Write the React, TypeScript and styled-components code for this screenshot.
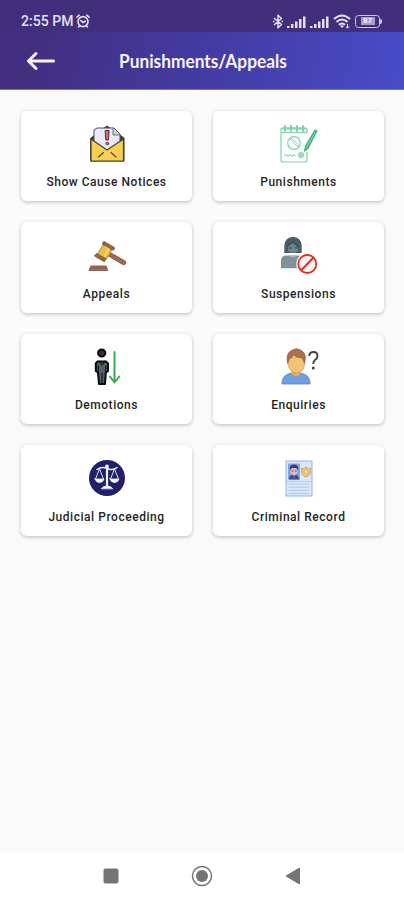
import React from "react";
import styled, { createGlobalStyle } from "styled-components";

const GlobalStyle = createGlobalStyle`
  * { box-sizing: border-box; }
  body { margin: 0; background: #fafafa; font-family: Roboto, sans-serif; }
`;

const Screen = styled.div`
  width: 404px;
  height: 900px;
  display: flex;
  flex-direction: column;
  background: #fafafa;
  overflow: hidden;
`;

const StatusBar = styled.div`
  height: 32px;
  flex: none;
  display: flex;
  align-items: center;
  justify-content: space-between;
  padding: 10px 22px 0 21px;
  background: #412f7b;
  color: #e6e0f5;
`;

const StatusGroup = styled.div<{ $gap: number }>`
  display: flex;
  align-items: center;
  gap: ${(p) => p.$gap}px;
  svg { display: block; }
`;

const Clock = styled.span`
  font-size: 14px;
  line-height: 20px;
  font-weight: 500;
  letter-spacing: 0.05px;
  white-space: nowrap;
`;

const Header = styled.header`
  height: 58px;
  flex: none;
  display: grid;
  grid-template-columns: 119px 1fr;
  align-items: center;
  background: linear-gradient(100deg, #422f80 8%, #43389b 42%, #484bc6 98%);
  border-bottom: 1px solid #7b74b4;
  color: #f6f4ff;
`;

const BackButton = styled.button`
  border: 0;
  background: none;
  padding: 0 0 0 26px;
  color: inherit;
  svg { display: block; }
`;

const Title = styled.h1`
  margin: 1px 0 0;
  justify-self: start;
  font-family: Lato, sans-serif;
  font-size: 19px;
  line-height: 24px;
  font-weight: 700;
  transform: scaleX(0.91);
  transform-origin: left center;
  white-space: nowrap;
`;

const Grid = styled.main`
  flex: 1;
  display: grid;
  grid-template-columns: 171px 171px;
  grid-auto-rows: 90.5px;
  align-content: start;
  gap: 21px;
  padding: 20.5px 21px;
`;

const Card = styled.div`
  display: flex;
  flex-direction: column;
  align-items: center;
  padding-top: 14.5px;
  border-radius: 6px;
  background: #fff;
  box-shadow: 0 1px 4px rgba(0, 0, 0, 0.18), 0 2px 3px rgba(0, 0, 0, 0.06);
`;

const Picture = styled.svg`
  width: 36px;
  height: 38px;
  flex: none;
  overflow: visible;
`;

const Label = styled.span`
  margin-top: 11px;
  font-size: 12px;
  line-height: 16px;
  font-weight: 500;
  letter-spacing: 0.54px;
  color: #262626;
  white-space: nowrap;
`;

const NavBar = styled.nav`
  height: 48px;
  flex: none;
  display: flex;
  justify-content: center;
  background: #fff;
`;

const NavButton = styled.button`
  width: 91.3px;
  border: 0;
  padding: 0;
  background: none;
  display: flex;
  align-items: center;
  justify-content: center;
`;

const Envelope = () => (
  <g strokeLinejoin="round" strokeLinecap="round">
    <path d="M2 13 18 1l17 12v23H2z" fill="#3b3b42" stroke="#33333a" />
    <path d="M5 17V5l3-2h17l6 6v9L18 27z" fill="#e9eafb" stroke="#4a4a55" strokeWidth="1" />
    <path d="M24 3v7h7" fill="#c3d3cf" stroke="#6b7471" strokeWidth="1" />
    <path d="M2 14 18 25 34.500 14v22H2z" fill="#f7cf52" stroke="#4b4326" strokeWidth="1.200" />
    <path d="m9.500 32 5-4.500M27 32l-5-4.500" fill="none" stroke="#5e4d20" strokeWidth="1.200" />
    <path d="M16.500 5.500h3.600L19.500 15h-2.400z" fill="#d36672" stroke="#572e3c" strokeWidth="1" />
    <circle cx="18.300" cy="18.600" r="1.400" fill="#d36672" stroke="#572e3c" strokeWidth=".8" />
  </g>
);

const Notepad = () => (
  <g fill="none" stroke="#7dd3aa" strokeWidth="1.200" strokeLinecap="round" strokeLinejoin="round">
    <path d="M26 8V5q0-2-2-2H2Q0 3 0 5v30q0 2 2 2h22q2 0 2-2v-8M0 7.500h26" />
    <path d="M4 1v5M10 1v5M16 1v5M22 1v5" strokeWidth="2" />
    <path d="M2 3.500h5M8 3.500h5M14 3.500h5M20 3.500h4" strokeWidth="1.800" />
    <circle cx="13" cy="18" r="6.300" />
    <path d="m8.600 13.500 8.900 9M10 12.500l8.500 8.600" strokeWidth=".9" />
    <path d="M4 30.500q1-1.500 2 0t2 0 2 0 2 0 2 0M18 28h4v4h-4zM20 27v6M17 30h6" />
    <path d="m23.500 26 1-5L34 5l2 1-9 17.500z" fill="#53bc8b" stroke="#49b481" />
    <path d="m26 21 8-13" stroke="#a5e3c5" strokeWidth=".6" />
  </g>
);

const Gavel = () => (
  <g stroke="#765645" strokeWidth=".9" strokeLinejoin="round">
    <path d="m18.500 14 17.500 10q1.500 1 .5 2.700t-2.700.8L17 17.500z" fill="#a36b48" />
    <path d="m14 8 9 5-5.500 9-9-5z" fill="#edbd4b" stroke="#a7813d" />
    <path d="m16 9 4 2.500-4.500 8" fill="none" stroke="#ffdb72" strokeWidth="1.400" />
    <path d="m15 4.500 10 5.700q1 .7.300 1.700l-1 1.300-11-6.300 1-1.800q.2-.7.700-.6z" fill="#9b6545" />
    <path d="m7.500 16.500 9.500 5.700-1.700 2.500L5.500 19z" fill="#9b6545" />
    <path d="M2 29h15l1.700 4.500H0z" fill="#ae7152" />
    <path d="M1 31h16.600" fill="none" />
  </g>
);

const BannedUser = () => (
  <g>
    <path d="M3.300 16V8.500a8.700 8.700 0 0 1 17.400 0V16z" fill="#4b5c69" />
    <path d="m7 10 3-3 2-1 5 4v4q-5 4-10 0z" fill="#72838d" />
    <path d="m6.500 9 5-4 6 5M8 11h2.500M14 11h2.500" fill="none" stroke="#293b49" />
    <path d="M0 31.300V24q0-5.500 5.500-5.500h12q3 0 4.500 3v9.800z" fill="#7e919d" />
    <path d="M8 18.500q4 4 8 0" fill="#aab8bf" />
    <circle cx="26.300" cy="27" r="11" fill="#fff" />
    <circle cx="26.300" cy="27" r="9" fill="#fff2ef" stroke="#d53427" strokeWidth="1.800" />
    <path d="m20.300 33.200 12-12.400" stroke="#d53427" strokeWidth="2" />
  </g>
);

const Demotion = () => (
  <g strokeLinecap="round" strokeLinejoin="round">
    <circle cx="12.700" cy="5" r="3.600" fill="#293339" stroke="#080a0b" strokeWidth="2" />
    <path d="M8.500 13.500h8.500l2 2V23l-2.200 1.500-.8 11.500h-6L9 24.500 6.800 23v-7.500z" fill="#52616a" stroke="#090b0c" strokeWidth="2" />
    <path d="m10 13 3 4 3-4M9.300 18v6.500M16.600 18v6.500M13 25v11" fill="none" stroke="#111719" strokeWidth="1.200" />
    <path d="M25.500 4v30M21 28.500l4.500 6 4.800-6" fill="none" stroke="#3fa853" strokeWidth="2" />
  </g>
);

const Enquiry = () => (
  <g>
    <path d="M1 36v-2q1-8 10-9h8q9 1 10 9v2z" fill="#6c9fe4" stroke="#5783bd" strokeWidth=".8" />
    <path d="M10.500 21h9v5q-4.500 5-9 0z" fill="#e1a85c" />
    <path d="M7 9h16.500v7q-.5 8.500-8 9Q8 24 7.200 16z" fill="#f1c373" stroke="#c99455" strokeWidth=".6" />
    <path d="M6.700 15.500Q4.500 5 10.500 2.500 16-1 21 3q5 3 2.500 12.500L21.500 10q-6-.5-9-3-1 3-4 3.500z" fill="#ac704b" stroke="#8e5a3e" strokeWidth=".7" />
    <path d="M28.300 8q0-4 4.200-4 4 0 4 4 0 2.300-2.500 4-1.700 1.300-1.700 4" fill="none" stroke="#3f4148" strokeWidth="1.900" />
    <rect x="31" y="18.800" width="2.600" height="2.600" fill="#3f4148" />
  </g>
);

const Scales = () => (
  <g>
    <circle cx="18" cy="18" r="18" fill="#201f68" />
    <g fill="none" stroke="#f5f5fc" strokeWidth="1.400" strokeLinecap="round" strokeLinejoin="round">
      <path d="M8 9.500q5-3.500 10-1 5 2.500 10-1M18 6v20" />
      <path d="m10.500 9-4 10M10.500 9l4 10M25.500 9l-4 10M25.500 9l4 10" strokeWidth=".9" />
      <circle cx="18" cy="6.500" r="1.200" fill="#f5f5fc" />
      <path d="M6 19h9q-1 3.500-4.500 3.500T6 19zM21 19h9q-1 3.500-4.500 3.500T21 19zM12.500 28.500q1-2 4.500-2.500h2q3.500.5 4.500 2.500z" fill="#f5f5fc" strokeWidth=".8" />
      <path d="M18 10v16" strokeWidth="2.200" />
    </g>
  </g>
);

const Record = () => (
  <g>
    <rect x="5" y="1" width="26" height="35" fill="#d9e8fb" stroke="#8aabd4" strokeWidth=".9" />
    <rect x="7" y="3.500" width="12" height="16" fill="#7da6e3" />
    <path d="M8 19.500q0-5 5-5.500 5 .5 5 5.500z" fill="#354b98" />
    <path d="M9.500 8h7v5q-3.500 5-7 0z" fill="#e2b2bd" />
    <path d="M9 10q-1.500-5 4-5.500 5.500.5 4 5.500l-2-2h-4z" fill="#313f81" />
    <path d="M10.500 11h2M13.700 11h2" stroke="#66548b" strokeWidth=".9" />
    <path d="m12 15 1 4 1-4" fill="#bc6585" />
    <path d="m20.500 8 2 .5L25 7l2.500 1.500 2-.5v4q0 3.500-4.500 5-4.500-1.500-4.500-5z" fill="#f0c57d" stroke="#c69c61" strokeWidth=".8" />
    <circle cx="25" cy="11.700" r="2.200" fill="#f8dfac" stroke="#c69c61" strokeWidth=".6" />
    <path d="M5.500 21.500h25M7.500 24h21M7.500 27.200h21M7.500 30.400h21M7.500 33.400h21" stroke="#a6c2e9" strokeWidth=".8" />
  </g>
);

const items = [
  { label: "Show Cause Notices", Icon: Envelope },
  { label: "Punishments", Icon: Notepad },
  { label: "Appeals", Icon: Gavel },
  { label: "Suspensions", Icon: BannedUser },
  { label: "Demotions", Icon: Demotion },
  { label: "Enquiries", Icon: Enquiry },
  { label: "Judicial Proceeding", Icon: Scales },
  { label: "Criminal Record", Icon: Record },
];

const Alarm = () => (
  <svg width="14" height="14" viewBox="0 0 14 14" fill="none" stroke="currentColor" strokeWidth="1.6" strokeLinecap="round">
    <circle cx="7" cy="7.600" r="5" />
    <path d="m1 3.200 2.200-2M13 3.200l-2.200-2M4.800 6.500 7 8.500l2.300-1.300M3.500 12l-1 1M10.500 12l1 1" />
  </svg>
);

const Bluetooth = () => (
  <svg width="10" height="15" viewBox="0 0 10 15" fill="none" stroke="currentColor" strokeWidth="1.5" strokeLinejoin="round">
    <path d="m1 4 7.500 6.500L5 13.800V1.200l3.500 3.300L1 11M0 7.500h1.500M8.500 7.500H10" />
  </svg>
);

const Signal = () => (
  <svg width="19" height="13" viewBox="0 0 19 13" fill="currentColor">
    <path d="M0 11h2.500v2H0zM4 9h2.500v4H4zM8 6.500h2.500V13H8zM12 4h2.500v9H12zM16 1.500h2.500V13H16z" />
  </svg>
);

const Wifi = () => (
  <svg width="18" height="15" viewBox="0 0 18 15" fill="none" stroke="currentColor" strokeWidth="2.1">
    <path d="M1 5q8-7 16 0M3.500 8q5.500-5 11 0M6 10.800q3-2.600 6 0" />
    <path d="m9 14-2.300-2.500h4.600z" fill="currentColor" stroke="none" />
    <path d="M14.500 10v4M12.800 12.500l1.700 1.700 1.700-1.700" strokeWidth="1" />
  </svg>
);

const BatteryShell = styled.div`
  display: flex;
  align-items: center;
`;

const BatteryBody = styled.div`
  width: 25px;
  height: 13px;
  border: 1.5px solid #cfc7e5;
  border-radius: 3.5px;
  display: flex;
  align-items: center;
  justify-content: center;
  padding: 1px;
`;

const BatteryLevel = styled.span`
  width: 14px;
  height: 8px;
  background: #a89fc9;
  color: #f4f0ff;
  font-size: 8px;
  line-height: 8px;
  font-weight: 700;
  text-align: center;
`;

const BatteryTip = styled.span`
  width: 2px;
  height: 5px;
  border-radius: 0 2px 2px 0;
  background: #cfc7e5;
`;

export default function App() {
  return (
    <>
      <GlobalStyle />
      <Screen>
        <StatusBar>
          <StatusGroup $gap={2}>
            <Clock>2:55 PM</Clock>
            <Alarm />
          </StatusGroup>
          <StatusGroup $gap={4}>
            <Bluetooth />
            <Signal />
            <Signal />
            <Wifi />
            <BatteryShell>
              <BatteryBody><BatteryLevel>87</BatteryLevel></BatteryBody>
              <BatteryTip />
            </BatteryShell>
          </StatusGroup>
        </StatusBar>
        <Header>
          <BackButton aria-label="Back">
            <svg width="30" height="20" viewBox="0 0 30 20" fill="none" stroke="currentColor" strokeWidth="3" strokeLinecap="round" strokeLinejoin="round">
              <path d="M27.500 10H2.500M10 2.500 2.500 10l7.500 7.500" />
            </svg>
          </BackButton>
          <Title>Punishments/Appeals</Title>
        </Header>
        <Grid>
          {items.map(({ label, Icon }) => (
            <Card key={label}>
              <Picture viewBox="0 0 36 38"><Icon /></Picture>
              <Label>{label}</Label>
            </Card>
          ))}
        </Grid>
        <NavBar>
          <NavButton aria-label="Recent apps">
            <svg width="16" height="16"><rect x=".5" y=".5" width="15" height="15" rx="2" fill="#757575" /></svg>
          </NavButton>
          <NavButton aria-label="Home">
            <svg width="22" height="22"><circle cx="11" cy="11" r="9.500" fill="none" stroke="#757575" strokeWidth="1.500" /><circle cx="11" cy="11" r="6" fill="#757575" /></svg>
          </NavButton>
          <NavButton aria-label="Go back">
            <svg width="16" height="18"><path d="M14.500 1v16L1 9z" fill="#757575" stroke="#757575" strokeLinejoin="round" /></svg>
          </NavButton>
        </NavBar>
      </Screen>
    </>
  );
}
